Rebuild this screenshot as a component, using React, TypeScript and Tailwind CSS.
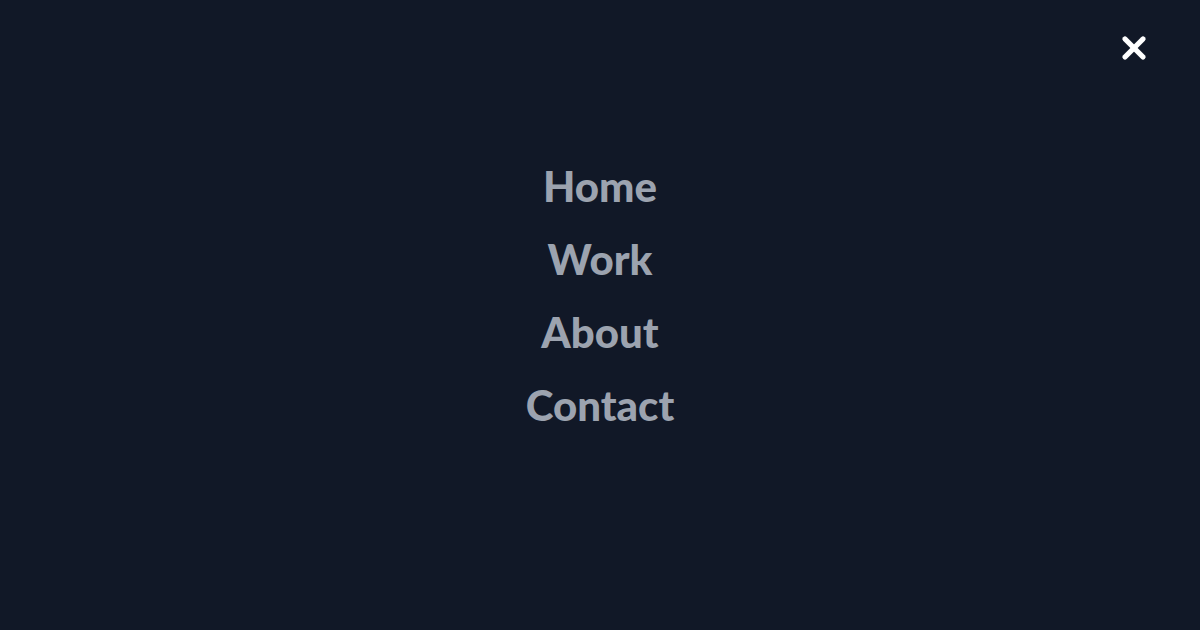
import React from 'react';
import { X } from 'lucide-react';

const links = ['Home', 'Work', 'About', 'Contact'];

const App: React.FC = () => {
  return (
    <div className="relative w-full h-[630px] bg-[#111827] overflow-hidden" style={{ fontFamily: 'Lato, "Open Sans", sans-serif' }}>
      <button className="absolute top-[30px] right-[48px] text-white">
        <X size={36} strokeWidth={3.5} />
      </button>
      <nav className="flex flex-col items-center pt-[165px] gap-[31px]">
        {links.map((l) => (
          <a key={l} href="#" className="text-[42px] leading-[42px] font-black text-[#9ca3af]">
            {l}
          </a>
        ))}
      </nav>
    </div>
  );
};

export default App;
